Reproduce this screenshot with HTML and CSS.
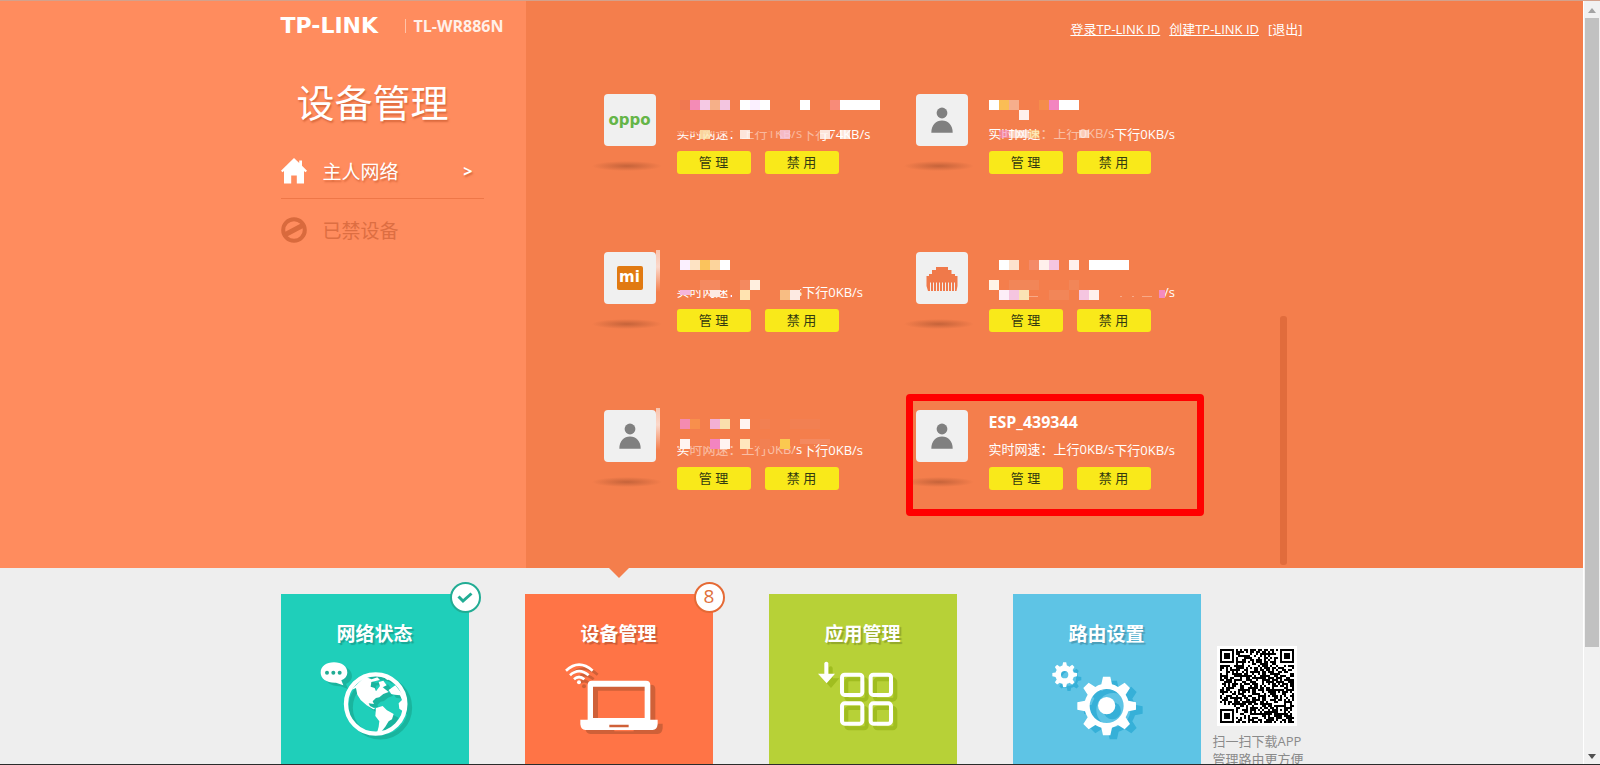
FILE: index.html
```html
<!DOCTYPE html>
<html lang="zh-CN">
<head>
<meta charset="utf-8">
<title>TL-WR886N</title>
<link rel="stylesheet" href="styles.css">
</head>
<body>
<svg class="defs" width="0" height="0" aria-hidden="true">
  <defs>
    <symbol id="user" viewBox="0 0 52 52"><circle cx="26" cy="19" r="5.4"/><path d="M15.3 38.8C15.3 31 20 26.6 26 26.6S36.7 31 36.7 38.8Z"/></symbol>
    <g id="gear">
      <path d="M-11 -88 H11 L16 -65 A67 67 0 0 1 34 -57 L54 -70 L70 -54 L57 -34 A67 67 0 0 1 65 -16 L88 -11 V11 L65 16 A67 67 0 0 1 57 34 L70 54 L54 70 L34 57 A67 67 0 0 1 16 65 L11 88 H-11 L-16 65 A67 67 0 0 1 -34 57 L-54 70 L-70 54 L-57 34 A67 67 0 0 1 -65 16 L-88 11 V-11 L-65 -16 A67 67 0 0 1 -57 -34 L-70 -54 L-54 -70 L-34 -57 A67 67 0 0 1 -16 -65 Z M0 -51 A51 51 0 1 0 0 51 A51 51 0 1 0 0 -51 Z" fill-rule="evenodd"/>
    </g>
    <g id="globe">
      <circle cx="317" cy="432" r="89" fill="none" stroke="currentColor" stroke-width="13"/>
      <path fill="currentColor" d="M243 390L262 372L285 350L305 358L322 352L330 360L304 366L302 380L314 384L318 394L330 378L326 366L340 362L350 376L338 382L356 396L340 402L328 412L318 414L308 424L312 432L296 430L300 438L316 446L310 448L290 436L272 420L262 404L258 384Z"/>
      <path fill="currentColor" d="M318 444L338 438L350 450L371 462L366 478L356 484L346 500L336 512L320 522L326 500L328 484L316 468Z"/>
      <path fill="currentColor" d="M356 390L376 376L392 396L410 432L402 456L388 446L386 430L396 420L390 406L374 404L364 402Z"/>
      <path fill="currentColor" d="M340 350L360 356L352 360Z"/>
    </g>
    <g id="bubble"><path fill="currentColor" d="M192 307C215 307 232 319 232 338C232 348 225 356 214 361L220 376L198 368C170 369 152 356 152 338C152 319 169 307 192 307Z"/></g>
    <g id="laptop">
      <path fill="currentColor" fill-rule="evenodd" d="M246 362H408Q421 362 421 375V479H443V493Q441 510 428 510H226Q213 510 211 493V479H233V375Q233 362 246 362ZM249 380V474H404V380ZM298 494V502H356V494Z"/>
      <g fill="none" stroke="currentColor" stroke-width="8"><path d="M168 332Q207 296 248 332"/><path d="M180 346Q207 321 236 346"/><path d="M192 358Q207 344 223 358"/></g>
      <circle cx="207" cy="367" r="6" fill="currentColor"/>
    </g>
    <g id="apps">
      <g fill="none" stroke="currentColor" stroke-width="12"><rect x="246" y="287" width="61" height="61" rx="8"/><rect x="332" y="287" width="61" height="61" rx="8"/><rect x="246" y="373" width="61" height="61" rx="8"/><rect x="332" y="373" width="61" height="61" rx="8"/></g>
      <path fill="currentColor" d="M193 252Q199 244 205 252V284H225L200 313L174 284H193Z"/>
    </g>
  </defs>
</svg>

<div class="window">
  <div class="page">
    <main class="panel">
      <aside class="side">
        <div class="brand"><span class="logo">TP-LINK</span><span class="model">TL-WR886N</span></div>
        <h1>设备管理</h1>
        <nav class="menu">
          <a class="menu-item active" href="#host">
            <svg viewBox="0 0 26 26" width="26" height="26" fill="#fff" aria-hidden="true"><path d="M13 0L18.200 5V2.500H21V7.800L26 12.800L24.500 14.200L23 13V25.500H15.800V17.500H10.200V25.500H3V13L1.500 14.200L0 12.800Z"/></svg>
            <span class="name">主人网络</span><span class="arrow">&gt;</span>
          </a>
          <a class="menu-item muted" href="#blocked">
            <svg viewBox="0 0 26 26" width="26" height="26" fill="none" stroke="#d96a3d" stroke-width="4" aria-hidden="true"><circle cx="13" cy="13" r="10.800"/><path stroke-width="5" d="M4.500 17.500L21.500 8.500"/></svg>
            <span class="name">已禁设备</span>
          </a>
        </nav>
      </aside>

      <section class="content">
        <div class="account"><a href="#login">登录TP-LINK ID</a><a href="#create">创建TP-LINK ID</a><a class="plain" href="#exit">[退出]</a></div>
        <div class="list-area">
          <div class="devices">
            <article class="device">
              <div class="thumb"><span class="oppo">oppo</span></div>
              <div class="info"><h2></h2><p class="speed"><span>实时网速：</span><span>上行1KB/s</span><span class="down">下行74KB/s</span></p>
                <div class="actions"><button>管 理</button><button>禁 用</button></div></div>
              <svg class="mosaic" width="290" height="80" aria-hidden="true">
                <path fill="#f47e4c" d="M70 30H226V37H70Z"/><path fill="#f47e4c" fill-opacity=".55" d="M70 37H236V40H70ZM128 37H218V47H128Z"/>
                <g><path fill="#f07850" d="M76 6h10v10h-10z"/><path fill="#f48bb6" d="M86 6h10v10h-10z"/><path fill="#f5c9e4" d="M96 6h10v10h-10z"/><path fill="#f6b088" d="M106 6h10v10h-10z"/><path fill="#f3c5e0" d="M116 6h10v10h-10z"/><path fill="#fff" d="M136 6h30v10h-30zM196 6h10v10h-10zM236 6h40v10h-40z"/><path fill="#fbf0ff" d="M146 6h10v10h-10z"/><path fill="#f88b78" d="M226 6h10v10h-10z"/></g>
                <g fill-opacity=".8"><path fill="#fbe9b0" d="M96 36h10v9h-10z"/><path fill="#fff" d="M136 36h10v9h-10zM216 36h10v9h-10zM236 36h10v9h-10z"/><path fill="#f5c9e4" d="M176 36h10v9h-10z"/></g>
              </svg>
            </article>
            <article class="device">
              <div class="thumb"><svg width="52" height="52" fill="#808080"><use href="#user"/></svg></div>
              <div class="info"><h2></h2><p class="speed"><span>实时网速：</span><span>上行0KB/s</span><span class="down">下行0KB/s</span></p>
                <div class="actions"><button>管 理</button><button>禁 用</button></div></div>
              <svg class="mosaic" width="290" height="80" aria-hidden="true">
                <path fill="#f47e4c" d="M70 30H196V35H70Z"/><path fill="#f47e4c" fill-opacity=".5" d="M126 35H196V47H126Z"/>
                <path fill="#fff" d="M73 6h10v10h-10zM143 6h20v10h-20z"/><path fill="#fabd55" d="M83 6h10v10h-10z"/><path fill="#f6ae8c" d="M93 6h10v10h-10z"/><path fill="#fff0ec" d="M103 16h10v10h-10z"/><path fill="#f58c4b" d="M123 6h10v10h-10z"/><path fill="#f384c0" d="M133 6h10v10h-10z"/>
                <g fill-opacity=".6"><path fill="#f48bc0" d="M83 36h10v8h-10z"/><path fill="#fff" d="M93 36h20v8h-20zM163 36h10v8h-10z"/><path fill="#fbe090" d="M113 36h10v8h-10z"/></g>
              </svg>
            </article>
            <article class="device">
              <div class="thumb smear"><span class="mi">mi</span></div>
              <div class="info"><h2></h2><p class="speed"><span>实时网速：</span><span>上行0KB/s</span><span class="down">下行0KB/s</span></p>
                <div class="actions"><button>管 理</button><button>禁 用</button></div></div>
              <svg class="mosaic" width="290" height="80" aria-hidden="true">
                <path fill="#f47e4c" d="M70 28H196V38H70ZM128 38H196V47H128Z"/>
                <path fill="#fbf0ff" d="M76 8h10v10h-10z"/><path fill="#fde3c4" d="M86 8h10v10h-10z"/><path fill="#fbc35c" d="M96 8h10v10h-10z"/><path fill="#fcd49c" d="M106 8h10v10h-10z"/><path fill="#fff" d="M116 8h10v10h-10z"/>
                <path fill="#f4895f" d="M96 28h20v10h-20zM136 28h10v10h-10z"/><path fill="#ffefdf" d="M146 28h10v10h-10z"/><path fill="#ffe3b0" d="M136 38h10v10h-10z"/><path fill="#f8bd83" d="M176 38h10v10h-10z"/><path fill="#fdeae2" d="M186 38h10v10h-10zM106 38h10v7h-10z"/><path fill="#f5b5dc" d="M76 38h10v5h-10z"/>
              </svg>
            </article>
            <article class="device">
              <div class="thumb"><svg width="52" height="52" viewBox="0 0 52 52" aria-hidden="true"><path fill="#f0794a" d="M20 15H32V18H35.500V22H39V24H41.500V34L40.500 39H12L10.500 34V24H13V22H16V18H20Z"/><path stroke="#f0f0f0" stroke-width="1" d="M14.500 30.500V39M17.500 30.500V39M20.500 30.500V39M23.500 30.500V39M26.500 30.500V39M29.500 30.500V39M32.500 30.500V39M35.500 30.500V39M38.500 30.500V39"/></svg></div>
              <div class="info"><h2></h2><p class="speed"><span>实时网速：</span><span>上行0KB/s</span><span class="down">下行0KB/s</span></p>
                <div class="actions"><button>管 理</button><button>禁 用</button></div></div>
              <svg class="mosaic" width="290" height="80" aria-hidden="true">
                <path fill="#f47e4c" d="M70 28H248V48H70Z"/>
                <path fill="#fff" d="M83 8h10v10h-10zM173 8h40v10h-40z"/><path fill="#fde2cd" d="M93 8h10v10h-10z"/><path fill="#f48a68" d="M113 8h10v10h-10z"/><path fill="#fff0ec" d="M123 8h10v10h-10zM153 8h10v10h-10z"/><path fill="#f5c5e0" d="M133 8h10v10h-10z"/>
                <path fill="#fff4e8" d="M73 28h10v10h-10z"/><path fill="#f28658" d="M93 28h30v10h-30zM153 28h10v10h-10zM133 38h20v10h-20z"/><path fill="#fdeef8" d="M83 38h10v10h-10z"/><path fill="#f5c5e0" d="M93 38h10v10h-10zM163 38h10v10h-10z"/><path fill="#fae3b4" d="M103 38h10v10h-10z"/><path fill="#fff0ec" d="M173 38h10v10h-10z"/><path fill="#f48bc0" d="M243 38h6v8h-6z"/><path fill="#f8a987" d="M113 44h9v1h-9zM204 44h2v1h-2zM216 44h2v1h-2zM226 44h10v1h-10z"/>
              </svg>
            </article>
            <article class="device">
              <div class="thumb smear"><svg width="52" height="52" fill="#808080"><use href="#user"/></svg></div>
              <div class="info"><h2></h2><p class="speed"><span>实时网速：</span><span>上行0KB/s</span><span class="down">下行0KB/s</span></p>
                <div class="actions"><button>管 理</button><button>禁 用</button></div></div>
              <svg class="mosaic" width="290" height="80" aria-hidden="true">
                <path fill="#f47e4c" d="M70 29H210V36H70Z"/><path fill="#f47e4c" fill-opacity=".5" d="M86 36H190V47H86Z"/>
                <path fill="#f48bb0" d="M76 9h10v10h-10z"/><path fill="#f88f4c" d="M86 9h10v10h-10z"/><path fill="#f3b0d4" d="M106 9h10v10h-10z"/><path fill="#fae0ac" d="M116 9h10v10h-10z"/><path fill="#fff4f2" d="M136 9h10v10h-10zM76 29h10v10h-10zM116 29h10v10h-10z"/><path fill="#f28052" d="M156 9h10v10h-10zM186 9h30v10h-30zM156 29h10v10h-10z"/>
                <path fill="#f4895f" d="M196 29h30v5h-30z"/><path fill="#f384c0" d="M106 29h10v10h-10z"/><path fill="#ffe6bd" d="M136 29h10v10h-10z"/><path fill="#fbc950" d="M176 29h10v10h-10z"/>
              </svg>
            </article>
            <article class="device marked">
              <div class="thumb"><svg width="52" height="52" fill="#808080"><use href="#user"/></svg></div>
              <div class="info"><h2>ESP_439344</h2><p class="speed"><span>实时网速：</span><span>上行0KB/s</span><span class="down">下行0KB/s</span></p>
                <div class="actions"><button>管 理</button><button>禁 用</button></div></div>
            </article>
          </div>
          <div class="list-thumb"></div>
        </div>
      </section>
    </main>

    <footer class="dock">
      <nav class="tiles">
        <a class="tile teal" href="#status"><span class="badge"><svg viewBox="0 0 16 12" width="16" height="12" fill="none" stroke="#22ac94" stroke-width="3"><path d="M1.500 4.500L6 9L14.500 1.500"/></svg></span>
          <span class="tile-name">网络状态</span>
          <svg width="120" height="90" aria-hidden="true"><g transform="translate(-45 -96) scale(.3333)"><g color="#1ab49e" transform="translate(14 11)"><use href="#globe"/><use href="#bubble"/></g><g color="#fff"><use href="#globe"/><use href="#bubble"/></g><g fill="#22ac94"><circle cx="171" cy="338" r="6"/><circle cx="190" cy="338" r="6"/><circle cx="209" cy="338" r="6"/></g></g></svg>
        </a>
        <a class="tile orange" href="#devices"><span class="badge">8</span>
          <span class="tile-name">设备管理</span>
          <svg width="120" height="90" aria-hidden="true"><g transform="translate(-49 -96) scale(.3333)"><g color="#cf6038" transform="translate(15 12)"><use href="#laptop"/></g><g color="#fff"><use href="#laptop"/></g></g></svg>
        </a>
        <a class="tile green" href="#apps">
          <span class="tile-name">应用管理</span>
          <svg width="120" height="90" aria-hidden="true"><g transform="translate(-43 -77) scale(.3333)"><g color="#a0bd20" transform="translate(13 14)"><use href="#apps"/></g><g color="#fff"><use href="#apps"/></g></g></svg>
        </a>
        <a class="tile blue" href="#settings">
          <span class="tile-name">路由设置</span>
          <svg width="120" height="90" aria-hidden="true"><g transform="translate(-46 -76) scale(.3333)"><g fill="#36b0d8"><use href="#gear" transform="translate(337 390)"/><circle cx="334" cy="392" r="26"/><use href="#gear" transform="translate(204 296) scale(.42)"/></g><g fill="#fff"><use href="#gear" transform="translate(317 378)"/><circle cx="317" cy="377" r="26"/><circle cx="191" cy="284" r="18" fill="none" stroke="#fff" stroke-width="14"/><use href="#gear" transform="translate(191 284) scale(.42)"/></g></g></svg>
        </a>
      </nav>
      <div class="app">
        <svg class="qr" id="qr" viewBox="-3 -3 80 80" width="80" height="80" shape-rendering="crispEdges" role="img" aria-label="QR"></svg>
        <p>扫一扫下载APP<br>管理路由更方便</p>
      </div>
    </footer>
  </div>
  <div class="scrollbar" aria-hidden="true"><i class="up"></i><div class="bar"></div><i class="dn"></i></div>
</div>
<script src="qr.js"></script>
</body>
</html>
```
FILE: styles.css
```css
*, *::before, *::after { box-sizing: border-box; }
body { margin: 0; color: #fff; font-family: "Open Sans", "Noto Sans CJK SC", sans-serif; font-size: 13px; }
h1, h2, p { margin: 0; font-weight: 400; }
a { color: inherit; text-decoration: none; }
.defs { position: absolute; }
.window { display: flex; height: 100vh; overflow: hidden; border-top: 1px solid #d3a18c; border-bottom: 1px solid #2b2b2b; }
.page { flex: 1; overflow: hidden; background: #eee; }

.panel { display: flex; background: #f47e4c; }
.side { width: calc((100% - 1022px) / 2 + 245px); padding-left: calc((100% - 1022px) / 2); background: #ff8c5e; }
.brand { display: flex; align-items: center; height: 24px; margin-top: 13px; }
.logo { width: 124px; font: bold 22px "DejaVu Sans", sans-serif; line-height: 24px; }
.model { padding-left: 8px; border-left: 1px solid #ffc3a8; color: #fff0e8; font-size: 16px; font-weight: 700; line-height: 14px; }
h1 { margin: 34px 0 23px 16px; font-size: 38px; line-height: 60px; text-shadow: 1px 2px 2px #d9683c; }
.menu { width: 203px; }
.menu-item { display: flex; align-items: center; gap: 16px; height: 58px; font-size: 19px; }
.menu-item.active { height: 44px; padding-bottom: 11px; margin-bottom: 2px; border-bottom: 1px solid #ee7748; text-shadow: 1px 2px 2px #d9683c; }
.menu-item.muted { color: #dd6e42; }
.arrow { margin-left: auto; margin-right: 11px; font-size: 16px; font-weight: 700; }

.content { flex: 1; display: flex; flex-direction: column; padding-right: calc((100% - 1022px) / 2); padding-left: 78px; }
.account { display: flex; justify-content: flex-end; gap: 9px; padding-top: 18px; line-height: 20px; }
.account a { text-decoration: underline; }
.account .plain { text-decoration: none; }
.list-area { display: flex; justify-content: space-between; align-items: flex-end; padding: 55px 16px 0 0; }
.devices { display: grid; grid-template-columns: 312px 312px; grid-auto-rows: 158px; }
.device { position: relative; display: flex; align-items: flex-start; gap: 21px; }
.thumb { position: relative; display: flex; align-items: center; justify-content: center; width: 52px; height: 52px; border-radius: 4px; background: #f0f0f0; }
.thumb::after { content: ""; position: absolute; top: 67px; left: -12px; width: 70px; height: 10px; background: radial-gradient(closest-side, #c5633a, #f47e4c00); }
.smear::before { content: ""; position: absolute; top: -2px; left: 52px; width: 4px; height: 42px; background: linear-gradient(#f9c4ae, #fbd8ca 40%, #f47e4c); }
.oppo { color: #65b548; font: bold 15px "DejaVu Sans", sans-serif; }
.mi { width: 26px; height: 24px; border-radius: 2px; background: #e17a12; font: bold 15px "DejaVu Sans", sans-serif; line-height: 23px; text-align: center; }
.device h2 { height: 22px; margin-bottom: 7px; font-size: 16px; font-weight: 700; line-height: 24px; }
.speed { display: flex; line-height: 20px; white-space: nowrap; }
.down { padding-top: 1px; }
.actions { display: flex; gap: 14px; margin-top: 7px; }
.actions button { width: 74px; height: 23px; padding: 0; border: 0; border-radius: 3px; background: #f9e91a; color: #333a10; font: inherit; line-height: 23px; }
.mosaic { position: absolute; top: 0; left: 0; pointer-events: none; }
.marked::after { content: ""; position: absolute; top: -16px; left: -10px; width: 298px; height: 122px; border: 7px solid #f00; border-radius: 4px; }
.list-thumb { width: 7px; height: 249px; margin-bottom: 3px; border-radius: 3px; background: #e16c3c; }

.dock { display: flex; gap: 12px; width: 1022px; margin: 0 auto; padding-top: 26px; }
.tiles { display: flex; gap: 56px; }
.tile { position: relative; display: flex; flex-direction: column; align-items: center; width: 188px; height: 190px; padding-top: 26px; }
.tile-name { margin-bottom: 8px; font-size: 19px; font-weight: 700; line-height: 28px; text-shadow: 2px 2px 1px #0003; }
.teal { background: #1fcfba; }
.orange { background: #ff7446; }
.green { background: #b7d137; }
.blue { background: #5ec4e5; }
.orange::before { content: ""; position: absolute; top: -26px; left: 84px; border: 10px solid transparent; border-top-color: #f47e4c; border-bottom: 0; }
.badge { position: absolute; top: -12px; right: -12px; display: flex; align-items: center; justify-content: center; width: 31px; height: 31px; border: 2px solid #22ac94; border-radius: 50%; background: #fff; }
.orange .badge { border-color: #e56a35; padding-bottom: 3px; color: #e0713d; font-size: 19px; line-height: 24px; }
.app { width: 88px; padding-top: 52px; color: #8a8a8a; text-align: center; line-height: 18px; white-space: nowrap; }
.qr { display: block; margin: 0 auto 6px; background: #fff; }

.scrollbar { display: flex; flex-direction: column; align-items: center; width: 17px; padding: 7px 0 5px; border-left: 1px solid #fff; background: #f1f1f1; }
.scrollbar .bar { width: 14px; height: 629px; margin: 5px 0 auto; background: #c1c1c1; }
.up, .dn { border: 4px solid transparent; }
.up { border-top: 0; border-bottom: 5px solid #a3a3a3; }
.dn { border-bottom: 0; border-top: 5px solid #505050; }
```
FILE: qr.js
```js
const size = 37, unit = 2;
let seed = 886;
const random = () => (seed = (seed * 1103515245 + 12345) % 2147483648) / 2147483648;
const ring = (x, y, cx, cy) => Math.max(Math.abs(x - cx), Math.abs(y - cy));
let d = "";
for (let y = 0; y < size; y++) {
  for (let x = 0; x < size; x++) {
    let on = random() < 0.58;
    for (const [cx, cy] of [[3, 3], [33, 3], [3, 33]]) {
      const r = ring(x, y, cx, cy);
      if (r <= 4) on = r !== 4 && r !== 2;
    }
    const a = ring(x, y, 30, 30);
    if (a <= 2) on = a !== 1;
    if (on) d += `M${x * unit} ${y * unit}h${unit}v${unit}h-${unit}z`;
  }
}
const path = document.createElementNS("http://www.w3.org/2000/svg", "path");
path.setAttribute("d", d);
document.getElementById("qr").append(path);
```
